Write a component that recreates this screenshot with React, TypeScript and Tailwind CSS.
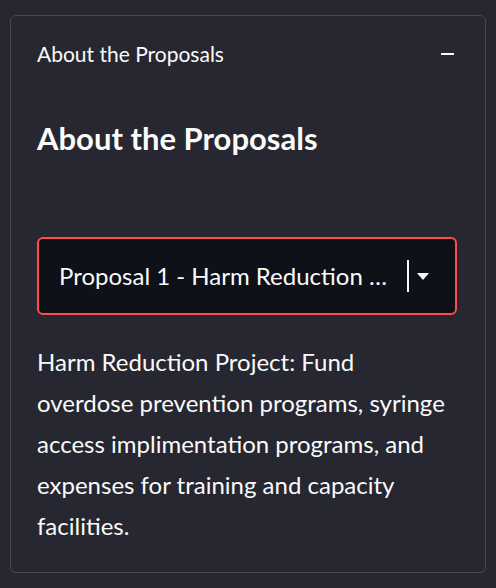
export default function App() {
  return (
    <div className="min-h-[588px] w-[496px] bg-[#262730] px-[10px] pt-[15px] font-['Lato',sans-serif] text-[#fafafa]">
      <div className="rounded-[6px] border border-[#45464f]">
        {/* Expander header */}
        <div className="flex h-[76px] items-center justify-between pl-[26px] pr-[31px]">
          <span className="text-[21px]">About the Proposals</span>
          <span className="block h-[2px] w-[13px] bg-[#fafafa]" />
        </div>

        {/* Expander body */}
        <div className="px-[26px] pb-[26px]">
          <h3 className="pt-[28px] text-[31px] font-bold leading-[1.2]">
            About the Proposals
          </h3>

          {/* Select box */}
          <div className="mt-[80px] flex h-[78px] w-[420px] items-center rounded-[6px] border-2 border-[#ff4b4b] bg-[#0e1117] pl-[20px] pr-[26px]">
            <span className="flex-1 truncate text-[24px]">
              Proposal 1 - Harm Reduction …
            </span>
            <span className="ml-[14px] h-[32px] w-[2px] bg-[#fafafa]" />
            <svg className="ml-[8px]" width="12" height="7" viewBox="0 0 12 7">
              <path d="M0 0h12L6 7z" fill="#fafafa" />
            </svg>
          </div>

          <p className="mt-[26px] max-w-[418px] text-[24px] leading-[41px]">
            Harm Reduction Project: Fund overdose prevention programs, syringe
            access implimentation programs, and expenses for training and
            capacity facilities.
          </p>
        </div>
      </div>
    </div>
  );
}
